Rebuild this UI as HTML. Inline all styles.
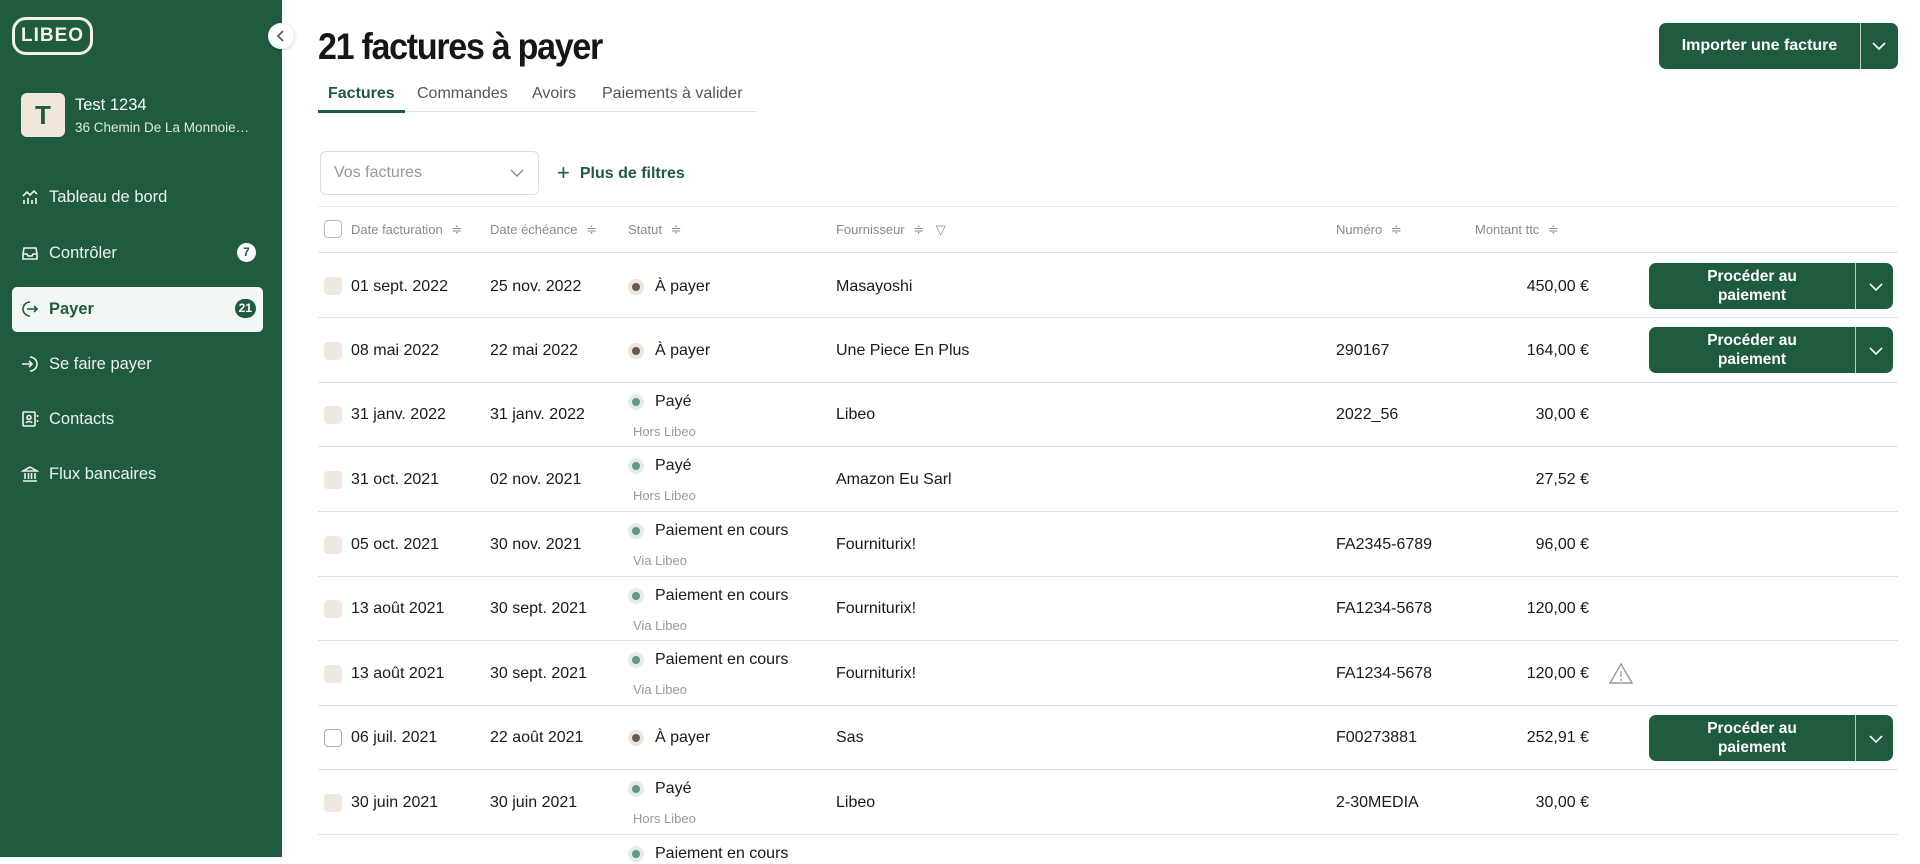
<!DOCTYPE html>
<html><head><meta charset="utf-8"><style>
*{box-sizing:border-box;margin:0;padding:0}
body{width:1920px;height:857px;overflow:hidden;background:#fff;font-family:"Liberation Sans",sans-serif;color:#1a1a1a;position:relative}
.sb{position:absolute;left:0;top:0;width:282px;height:857px;background:#1e5b3f}
.abs{position:absolute}
.logo{left:12px;top:17px;width:81px;height:38px;border:3px solid #f4efe8;border-radius:14px;color:#f4efe8;font-family:"Liberation Sans",sans-serif;font-weight:bold;font-size:19px;text-align:center;line-height:32px;letter-spacing:1px}
.coll{left:268px;top:23px;width:26px;height:26px;border-radius:50%;background:#fff;box-shadow:0 1px 4px rgba(0,0,0,.2);text-align:center}
.av{left:21px;top:93px;width:44px;height:44px;background:#f1e7dd;border-radius:6px;color:#1e5b3f;font-weight:bold;font-size:26px;text-align:center;line-height:44px}
.nav{left:0;width:282px;height:44px;color:#eef2ef;font-size:16.5px;line-height:44px;padding-left:49px}
.nav svg{position:absolute;left:21px;top:13px}
.badge{position:absolute;right:26px;top:12px;height:19px;min-width:19px;border-radius:10px;background:#fff;color:#1e5b3f;font-size:12px;font-weight:bold;text-align:center;line-height:19px;padding:0 4px}
.title{left:318px;top:26px;font-size:37px;font-weight:bold;letter-spacing:-1.4px;color:#161616;transform:scaleX(.92);transform-origin:left}
.tab{top:85px;font-size:16px;color:#555}
.btn{background:#1e5b3f;color:#fff;border-radius:7px;font-weight:bold;text-align:center}
.hd{top:222px;font-size:13px;color:#8a8a8a}
.row{position:absolute;left:318px;width:1580px;border-top:1px solid #e4e2dc}
.row div{position:absolute}
.cb{left:6px;width:18px;height:18px;border-radius:4px;background:#efe8df}
.t{font-size:16px;line-height:20px;white-space:nowrap}
.sub{font-size:13px;color:#999;line-height:16px}
.dot{width:16px;height:16px;border-radius:50%}
.dot i{position:absolute;left:4px;top:4px;width:8px;height:8px;border-radius:50%}
.g{background:#e3ece7}.g i{background:#5f9a7d}
.b{background:#ece5dc}.b i{background:#6c5b4c}
.amt{right:309px;text-align:right}
.pb{left:1331px;width:244px;height:46px;background:#1e5b3f;border-radius:7px;color:#fff;font-weight:bold;font-size:15.5px;line-height:19px}
.pb span{position:absolute;left:0;width:206px;top:4px;text-align:center}
.pb em{position:absolute;left:206px;top:0;width:1px;height:46px;background:#fff;opacity:.7}
.pb svg{position:absolute;left:219px;top:18px}
</style></head><body>
<div class="sb">
<div class="abs logo">LIBEO</div>
<div class="abs av">T</div>
<div class="abs" style="left:75px;top:96px;color:#fff;font-size:16.5px">Test 1234</div>
<div class="abs" style="left:75px;top:120px;color:#dfe7e2;font-size:13.5px">36 Chemin De La Monnoie…</div>
<div class="abs nav" style="top:175px"><svg width="18" height="18" viewBox="0 0 18 18" fill="none" stroke="#eef2ef" stroke-width="1.6"><path d="M2 8l4-4 3 3 4-4 3 3"/><path d="M3 16v-4M7 16v-6M11 16v-4M15 16v-6"/></svg>Tableau de bord</div>
<div class="abs nav" style="top:231px"><svg width="18" height="18" viewBox="0 0 18 18" fill="none" stroke="#eef2ef" stroke-width="1.6"><path d="M3 4h12l1 6v5H2v-5z"/><path d="M2 10h4l1 2h4l1-2h4"/></svg>Contrôler<span class="badge">7</span></div>
<div class="abs" style="left:12px;top:287px;width:251px;height:45px;background:#f3f7f4;border-radius:5px"></div>
<div class="abs nav" style="top:287px;color:#1e5b3f;font-weight:bold"><svg width="18" height="18" viewBox="0 0 18 18" fill="none" stroke="#1e5b3f" stroke-width="1.6"><path d="M9 2a7 7 0 1 0 0 14"/><path d="M6 9h10M13 6l3 3-3 3"/></svg>Payer<span class="badge" style="background:#1e5b3f;color:#fff">21</span></div>
<div class="abs nav" style="top:342px"><svg width="18" height="18" viewBox="0 0 18 18" fill="none" stroke="#eef2ef" stroke-width="1.6"><path d="M9 2a7 7 0 1 1 0 14"/><path d="M1 9h10M8 6l3 3-3 3"/></svg>Se faire payer</div>
<div class="abs nav" style="top:397px"><svg width="18" height="18" viewBox="0 0 18 18" fill="none" stroke="#eef2ef" stroke-width="1.6"><rect x="2" y="2" width="12" height="14" rx="1"/><circle cx="8" cy="7.5" r="2"/><path d="M5 13c1-2 5-2 6 0M16.5 5v2M16.5 10v2"/></svg>Contacts</div>
<div class="abs nav" style="top:452px"><svg width="18" height="18" viewBox="0 0 18 18" fill="none" stroke="#eef2ef" stroke-width="1.6"><path d="M2 6l7-4 7 4z"/><path d="M4 8v6M7.5 8v6M10.5 8v6M14 8v6M2 16h14"/></svg>Flux bancaires</div>
</div>
<div class="abs coll"><svg width="26" height="26" viewBox="0 0 26 26" fill="none" stroke="#555" stroke-width="1.6"><path d="M15 8l-5 5 5 5"/></svg></div>

<div class="abs title">21 factures à payer</div>
<div class="abs tab" style="left:328px;color:#1e5b3f;font-weight:bold">Factures</div>
<div class="abs tab" style="left:417px">Commandes</div>
<div class="abs tab" style="left:532px">Avoirs</div>
<div class="abs tab" style="left:602px">Paiements à valider</div>
<div class="abs" style="left:318px;top:111px;width:439px;height:1px;background:#e2e2e2"></div>
<div class="abs" style="left:318px;top:110px;width:87px;height:3px;background:#1e5b3f"></div>

<div class="abs btn" style="left:1659px;top:23px;width:239px;height:46px;font-size:16px;line-height:46px"><span style="position:absolute;left:0;width:201px">Importer une facture</span><em style="position:absolute;left:201px;top:0;width:1px;height:46px;background:#fff;opacity:.7"></em><svg style="position:absolute;left:212px;top:17px" width="16" height="12" viewBox="0 0 16 12" fill="none" stroke="#fff" stroke-width="1.6"><path d="M2 3l6 6 6-6"/></svg></div>

<div class="abs" style="left:320px;top:151px;width:219px;height:44px;border:1px solid #ddd;border-radius:6px;color:#999;font-size:16px;line-height:42px;padding-left:13px">Vos factures<svg style="position:absolute;right:14px;top:16px" width="14" height="10" viewBox="0 0 14 10" fill="none" stroke="#888" stroke-width="1.4"><path d="M1 2l6 6 6-6"/></svg></div>
<div class="abs" style="left:557px;top:158px;color:#1e5b3f;font-weight:bold;font-size:16px"><span style="font-size:22px;font-weight:normal;position:relative;top:2px;margin-right:10px">+</span>Plus de filtres</div>

<div class="abs" style="left:318px;top:206px;width:1580px;height:1px;background:#e8ebe9"></div>
<div class="abs" style="left:324px;top:220px;width:18px;height:18px;border:1px solid #bbb;border-radius:4px"></div>
<div class="abs hd" style="left:351px">Date facturation <span style="margin-left:5px">≑</span></div>
<div class="abs hd" style="left:490px">Date échéance <span style="margin-left:5px">≑</span></div>
<div class="abs hd" style="left:628px">Statut <span style="margin-left:5px">≑</span></div>
<div class="abs hd" style="left:836px">Fournisseur <span style="margin-left:5px">≑</span> <span style="margin-left:8px">▽</span></div>
<div class="abs hd" style="left:1336px">Numéro <span style="margin-left:5px">≑</span></div>
<div class="abs hd" style="left:1475px">Montant ttc <span style="margin-left:5px">≑</span></div>

<div class="row" style="top:252px;height:65px"><div class="cb" style="top:24px"></div><div class="t" style="left:33px;top:24px">01 sept. 2022</div><div class="t" style="left:172px;top:24px">25 nov. 2022</div><div class="dot b" style="left:310px;top:26px"><i></i></div><div class="t" style="left:337px;top:24px">À payer</div><div class="t" style="left:518px;top:24px">Masayoshi</div><div class="t amt" style="top:24px">450,00 €</div><div class="pb" style="top:10px"><span>Procéder au<br>paiement</span><em></em><svg width="16" height="12" viewBox="0 0 16 12" fill="none" stroke="#fff" stroke-width="1.6"><path d="M2 3l6 6 6-6"/></svg></div></div>
<div class="row" style="top:317px;height:65px"><div class="cb" style="top:24px"></div><div class="t" style="left:33px;top:23px">08 mai 2022</div><div class="t" style="left:172px;top:23px">22 mai 2022</div><div class="dot b" style="left:310px;top:25px"><i></i></div><div class="t" style="left:337px;top:23px">À payer</div><div class="t" style="left:518px;top:23px">Une Piece En Plus</div><div class="t" style="left:1018px;top:23px">290167</div><div class="t amt" style="top:23px">164,00 €</div><div class="pb" style="top:9px"><span>Procéder au<br>paiement</span><em></em><svg width="16" height="12" viewBox="0 0 16 12" fill="none" stroke="#fff" stroke-width="1.6"><path d="M2 3l6 6 6-6"/></svg></div></div>
<div class="row" style="top:382px;height:64px"><div class="cb" style="top:23px"></div><div class="t" style="left:33px;top:22px">31 janv. 2022</div><div class="t" style="left:172px;top:22px">31 janv. 2022</div><div class="dot g" style="left:310px;top:11px"><i></i></div><div class="t" style="left:337px;top:9px">Payé</div><div class="sub" style="left:315px;top:41px">Hors Libeo</div><div class="t" style="left:518px;top:22px">Libeo</div><div class="t" style="left:1018px;top:22px">2022_56</div><div class="t amt" style="top:22px">30,00 €</div></div>
<div class="row" style="top:446px;height:65px"><div class="cb" style="top:24px"></div><div class="t" style="left:33px;top:23px">31 oct. 2021</div><div class="t" style="left:172px;top:23px">02 nov. 2021</div><div class="dot g" style="left:310px;top:11px"><i></i></div><div class="t" style="left:337px;top:9px">Payé</div><div class="sub" style="left:315px;top:41px">Hors Libeo</div><div class="t" style="left:518px;top:23px">Amazon Eu Sarl</div><div class="t amt" style="top:23px">27,52 €</div></div>
<div class="row" style="top:511px;height:65px"><div class="cb" style="top:24px"></div><div class="t" style="left:33px;top:23px">05 oct. 2021</div><div class="t" style="left:172px;top:23px">30 nov. 2021</div><div class="dot g" style="left:310px;top:11px"><i></i></div><div class="t" style="left:337px;top:9px">Paiement en cours</div><div class="sub" style="left:315px;top:41px">Via Libeo</div><div class="t" style="left:518px;top:23px">Fourniturix!</div><div class="t" style="left:1018px;top:23px">FA2345-6789</div><div class="t amt" style="top:23px">96,00 €</div></div>
<div class="row" style="top:576px;height:64px"><div class="cb" style="top:23px"></div><div class="t" style="left:33px;top:22px">13 août 2021</div><div class="t" style="left:172px;top:22px">30 sept. 2021</div><div class="dot g" style="left:310px;top:11px"><i></i></div><div class="t" style="left:337px;top:9px">Paiement en cours</div><div class="sub" style="left:315px;top:41px">Via Libeo</div><div class="t" style="left:518px;top:22px">Fourniturix!</div><div class="t" style="left:1018px;top:22px">FA1234-5678</div><div class="t amt" style="top:22px">120,00 €</div></div>
<div class="row" style="top:640px;height:65px"><div class="cb" style="top:24px"></div><div class="t" style="left:33px;top:23px">13 août 2021</div><div class="t" style="left:172px;top:23px">30 sept. 2021</div><div class="dot g" style="left:310px;top:11px"><i></i></div><div class="t" style="left:337px;top:9px">Paiement en cours</div><div class="sub" style="left:315px;top:41px">Via Libeo</div><div class="t" style="left:518px;top:23px">Fourniturix!</div><div class="t" style="left:1018px;top:23px">FA1234-5678</div><div class="t amt" style="top:23px">120,00 €</div><div style="left:1290px;top:21px"><svg width="26" height="24" viewBox="0 0 26 24" fill="none" stroke="#999" stroke-width="1.4"><path d="M13 2L24 21H2z"/><path d="M13 9v6M13 17v2"/></svg></div></div>
<div class="row" style="top:705px;height:64px"><div class="cb" style="top:23px;background:#fff;border:1px solid #aaa"></div><div class="t" style="left:33px;top:22px">06 juil. 2021</div><div class="t" style="left:172px;top:22px">22 août 2021</div><div class="dot b" style="left:310px;top:24px"><i></i></div><div class="t" style="left:337px;top:22px">À payer</div><div class="t" style="left:518px;top:22px">Sas</div><div class="t" style="left:1018px;top:22px">F00273881</div><div class="t amt" style="top:22px">252,91 €</div><div class="pb" style="top:9px"><span>Procéder au<br>paiement</span><em></em><svg width="16" height="12" viewBox="0 0 16 12" fill="none" stroke="#fff" stroke-width="1.6"><path d="M2 3l6 6 6-6"/></svg></div></div>
<div class="row" style="top:769px;height:65px"><div class="cb" style="top:24px"></div><div class="t" style="left:33px;top:23px">30 juin 2021</div><div class="t" style="left:172px;top:23px">30 juin 2021</div><div class="dot g" style="left:310px;top:11px"><i></i></div><div class="t" style="left:337px;top:9px">Payé</div><div class="sub" style="left:315px;top:41px">Hors Libeo</div><div class="t" style="left:518px;top:23px">Libeo</div><div class="t" style="left:1018px;top:23px">2-30MEDIA</div><div class="t amt" style="top:23px">30,00 €</div></div>
<div class="row" style="top:834px;height:30px"><div class="dot g" style="left:310px;top:11px"><i></i></div><div class="t" style="left:337px;top:9px">Paiement en cours</div></div>
</body></html>
